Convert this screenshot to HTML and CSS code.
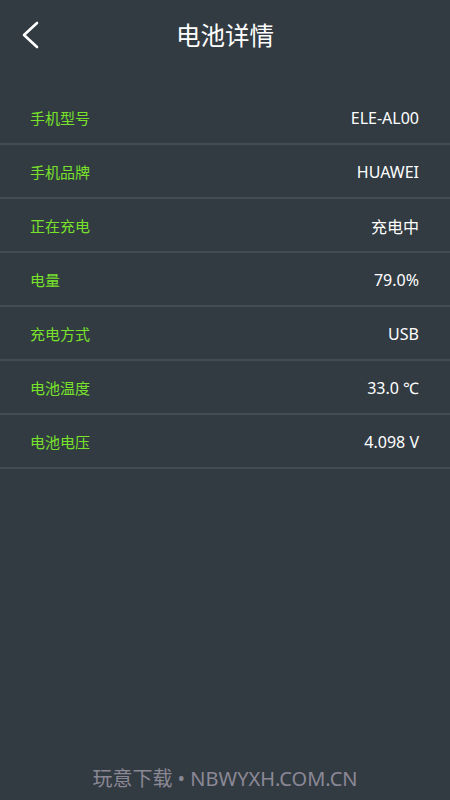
FILE: index.html
```html
<!DOCTYPE html>
<html lang="zh">
<head>
<meta charset="utf-8">
<link rel="stylesheet" href="styles.css">
</head>
<body>
<div class="screen">
  <header class="bar">
    <svg class="back" width="20" height="28" viewBox="0 0 20 28"><path d="M17 2 L4 14 L17 26" fill="none" stroke="#fff" stroke-width="2.6" stroke-linecap="round" stroke-linejoin="round"/></svg>
    <h1 class="title">电池详情</h1>
  </header>
  <ul class="list">
    <li class="row"><span class="label">手机型号</span><span class="value">ELE-AL00</span></li>
    <li class="row"><span class="label">手机品牌</span><span class="value">HUAWEI</span></li>
    <li class="row"><span class="label">正在充电</span><span class="value">充电中</span></li>
    <li class="row"><span class="label">电量</span><span class="value">79.0%</span></li>
    <li class="row"><span class="label">充电方式</span><span class="value">USB</span></li>
    <li class="row"><span class="label">电池温度</span><span class="value">33.0 ℃</span></li>
    <li class="row"><span class="label">电池电压</span><span class="value">4.098 V</span></li>
  </ul>
  <div class="watermark">玩意下载 • NBWYXH.COM.CN</div>
</div>
</body>
</html>
```
FILE: styles.css
```css
html, body { margin: 0; padding: 0; }
body { background: #323b42; font-family: "Noto Sans", "Noto Sans CJK SC", sans-serif; }
.screen { width: 450px; height: 800px; position: relative; background: #323b42; }
.bar { height: 68px; display: flex; align-items: center; justify-content: center; position: relative; }
.back { position: absolute; left: 20px; top: 21px; }
.title { margin: 0; font-size: 24.5px; font-weight: 400; color: #fff; font-family: "Noto Sans CJK SC", sans-serif; }
.list { list-style: none; margin: 23px 0 0 0; padding: 0; }
.row { height: 52px; display: flex; align-items: center; justify-content: space-between; padding: 0 31px 0 30px; border-bottom: 2px solid #434c53; }
.label { color: #78e22b; font-size: 15px; font-family: "Noto Sans CJK SC", sans-serif; }
.value { color: #fff; font-size: 16px; padding-top: 2px; font-family: "Noto Sans", "Noto Sans CJK SC", sans-serif; }
.watermark { position: absolute; left: 0; right: 0; bottom: 8px; text-align: center; color: #8b8896; font-size: 20px; font-family: "Noto Sans", "Noto Sans CJK SC", sans-serif; }
```
